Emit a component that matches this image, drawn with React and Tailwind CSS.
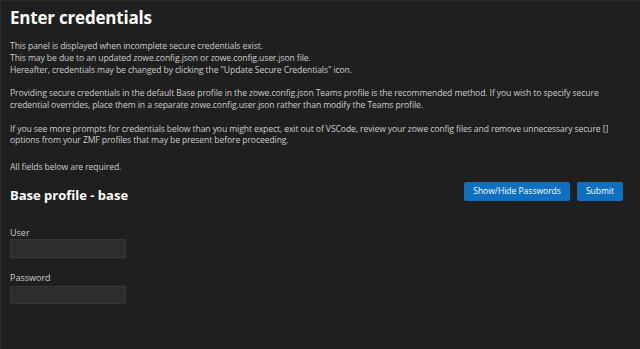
export default function App() {
  return (
    <div
      className="w-[640px] h-[349px] overflow-hidden bg-[#1f1f1f] border-t border-l border-[#2c2c2c] text-[#cccccc] pl-[9px] pr-[17px] pt-[4px]"
      style={{ fontFamily: "'Open Sans', 'Noto Sans', sans-serif" }}
    >
      <h1 className="text-[17px] font-bold text-white leading-[26px] tracking-[-0.2px]">Enter credentials</h1>

      <div className="mt-[10px] text-[8.6px] leading-[11.8px] tracking-[-0.1px]">
        <p>
          This panel is displayed when incomplete secure credentials exist.<br />
          This may be due to an updated zowe.config.json or zowe.config.user.json file.<br />
          Hereafter, credentials may be changed by clicking the "Update Secure Credentials" icon.
        </p>
        <p className="mt-[11.8px]">
          Providing secure credentials in the default Base profile in the zowe.config.json Teams profile is the recommended method. If you wish to specify secure credential overrides, place them in a separate zowe.config.user.json rather than modify the Teams profile.
        </p>
        <p className="mt-[11.8px]">
          If you see more prompts for credentials below than you might expect, exit out of VSCode, review your zowe config files and remove unnecessary secure [] options from your ZMF profiles that may be present before proceeding.
        </p>
        <p className="mt-[15px]">All fields below are required.</p>
      </div>

      <div className="flex items-start justify-between mt-[8px]">
        <h2 className="mt-[4px] text-[13px] font-bold text-white leading-[18px]">Base profile - base</h2>
        <div className="flex gap-[7px]">
          <button className="h-[19px] px-[9px] bg-[#0e70c0] text-white text-[8.5px] rounded-[2px]">Show/Hide Passwords</button>
          <button className="h-[19px] px-[9px] bg-[#0e70c0] text-white text-[8.5px] rounded-[2px]">Submit</button>
        </div>
      </div>

      <div className="mt-[23px] flex flex-col">
        <label className="text-[9px] leading-[12px]">User</label>
        <input className="w-[116px] h-[19px] bg-[#2d2d2d] border border-[#363636] outline-none" />
        <label className="mt-[14px] text-[9px] leading-[12px]">Password</label>
        <input type="password" className="mt-[2px] w-[116px] h-[18px] bg-[#2d2d2d] border border-[#363636] outline-none" />
      </div>
    </div>
  );
}
